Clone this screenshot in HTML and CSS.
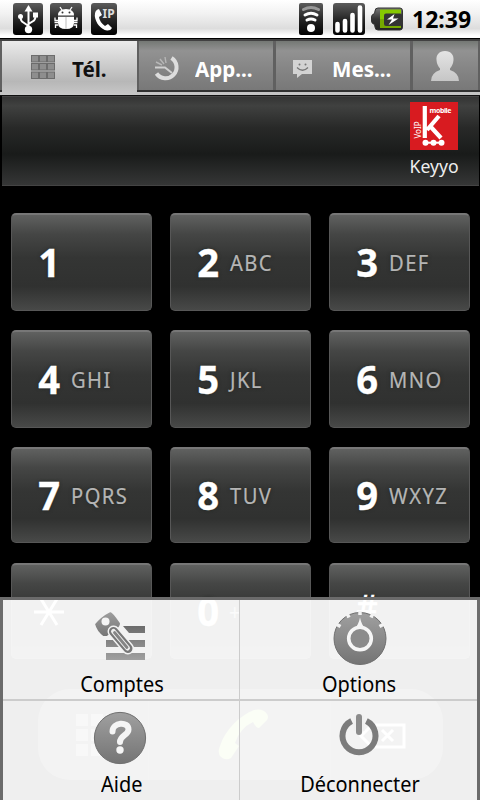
FILE: index.html
```
<!DOCTYPE html>
<html lang="fr">
<head>
<meta charset="utf-8">
<title>Keyyo</title>
<link rel="stylesheet" href="styles.css">
</head>
<body>
<div class="phone">
  <svg width="0" height="0" class="defs">
    <defs>
      <linearGradient id="dark" x1="0" y1="0" x2="0" y2="1"><stop offset="0" stop-color="#5c5c5c"/><stop offset=".55" stop-color="#222"/><stop offset="1" stop-color="#000"/></linearGradient>
      <linearGradient id="mg" x1="0" y1="0" x2="0" y2="1"><stop offset="0" stop-color="#a0a0a0"/><stop offset="1" stop-color="#747474"/></linearGradient>
      <linearGradient id="bar" x1="0" y1="0" x2="0" y2="1"><stop offset="0" stop-color="#6c6c6c"/><stop offset="1" stop-color="#a0a0a0"/></linearGradient>
      <linearGradient id="lg" x1="0" y1="0" x2="0" y2="1"><stop offset="0" stop-color="#e4e4e4"/><stop offset="1" stop-color="#c6c6c6"/></linearGradient>
      <linearGradient id="bat" x1="0" y1="0" x2="0" y2="1"><stop offset="0" stop-color="#777"/><stop offset=".5" stop-color="#333"/><stop offset="1" stop-color="#222"/></linearGradient>
    </defs>
  </svg>
  <header class="status">
    <div class="status-left">
      <svg class="usb" width="30" height="32" viewBox="0 0 30 32"><rect width="30" height="32" rx="3" fill="url(#dark)"/><g fill="none" stroke="#fff" stroke-width="2"><path d="M15.500 26V6M15.500 23L9 18.500Q7.500 17 7.500 14M15.500 21L21 17.500Q22.500 16 22.500 13"/></g><path d="M15.500 2L19.500 8.500H11.500Z" fill="#fff"/><circle cx="15.500" cy="26.500" r="3.700" fill="#fff"/><circle cx="7.500" cy="13.500" r="2.500" fill="#fff"/><rect x="20" y="9.500" width="5" height="5" fill="#fff"/></svg>
      <svg class="bug" width="32" height="32" viewBox="0 0 32 32"><rect width="32" height="32" rx="3" fill="url(#dark)"/><path d="M8 12.500Q8 6 16 6T24 12.500ZM8 13.800H24V20Q24 26 16 26T8 20Z" fill="#fff"/><path d="M12 7L10 4M20 7L22 4M8 17.500H5V14.500M8 19.500H4.500M8 22H5.500V25M24 17.500H27V14.500M24 19.500H27.500M24 22H26.500V25" stroke="#fff" stroke-width="1.300" fill="none"/><path d="M16 14V26" stroke="#bbb"/><circle cx="12.500" cy="9.500" r="1" fill="#333"/><circle cx="19.500" cy="9.500" r="1" fill="#333"/></svg>
      <svg class="ip" width="26" height="32" viewBox="0 0 26 32"><rect width="26" height="32" rx="3" fill="url(#dark)"/><path d="M8 6Q3.500 7 3.800 13C4.500 20 10 26.500 16 27.500Q19.500 27.800 21 25L17 21L14 23Q8.500 19 8 14L11 12Z" fill="#fff"/><text x="11.500" y="15" class="ip-text">IP</text></svg>
    </div>
    <div class="status-right">
      <svg class="wifi" width="24" height="32" viewBox="0 0 24 32"><rect width="24" height="32" rx="2" fill="url(#dark)"/><g fill="none" stroke-width="3" stroke-linecap="round"><path d="M4.500 6.500Q12 2.500 19.500 6.500" stroke="#999"/><path d="M6 12Q12 8.500 18 12M8 17Q12 15 16 17" stroke="#fff"/></g><circle cx="12" cy="25" r="4" fill="#fff"/></svg>
      <svg class="signal" width="32" height="32" viewBox="0 0 32 32"><rect width="32" height="32" rx="3" fill="url(#dark)"/><path d="M4.500 21V27.500M12 18V27.500M19.500 12V27.500M27 4.500V27.500" stroke="#fff" stroke-width="4.600" stroke-linecap="round"/></svg>
      <svg class="battery" width="32" height="24" viewBox="0 0 32 24"><path d="M7 1H29Q31.500 1 31.500 4V20Q31.500 23 29 23H7Q4 23 4 20L3.500 17.500Q.5 16.500 .5 14V10Q.5 7.500 3.500 6.500L4 4Q4 1 7 1Z" fill="url(#bat)" stroke="#333"/><path d="M9 2.500H30V21H9Z" fill="#86c800"/><path d="M9 12H30V21H9Z" fill="#75a900"/><rect x="13" y="6.500" width="18" height="12.500" rx="2" fill="#333"/><path d="M23.500 7L16 12.500H21L17.500 18L27.500 11.500H22Z" fill="#fff"/></svg>
      <span class="clock">12:39</span>
    </div>
  </header>
  <nav class="tabs">
    <div class="tab active">
      <svg width="26" height="26" viewBox="0 0 26 26"><g fill="#8e8e8e" stroke="#6c6c6c"><rect x="1.500" y="1.500" width="7" height="6.500"/><rect x="9.500" y="1.500" width="7" height="6.500"/><rect x="17.500" y="1.500" width="7" height="6.500"/><rect x="1.500" y="9.500" width="7" height="6.500"/><rect x="9.500" y="9.500" width="7" height="6.500"/><rect x="17.500" y="9.500" width="7" height="6.500"/><rect x="1.500" y="18" width="7" height="6.500"/><rect x="9.500" y="18" width="7" height="6.500"/><rect x="17.500" y="18" width="7" height="6.500"/></g></svg>
      <span>Tél.</span>
    </div>
    <div class="tab app">
      <svg width="28" height="28" viewBox="0 0 28 28"><path d="M18.500 3A11 11 0 1 1 3.500 18.500" fill="none" stroke="#ddd" stroke-width="4"/><path d="M2 12.500H12L19 18" fill="none" stroke="#d0d0d0" stroke-width="2"/><path d="M3 7L9 10M7 4L11 9M12 2L13 8" stroke="#b7b7b7" stroke-width="1.400"/></svg>
      <span>App...</span>
    </div>
    <div class="tab mes">
      <svg width="20" height="20" viewBox="0 0 20 20"><path d="M0 1H19V15H9L4 19V15H0Z" fill="#d3d3d3"/><path d="M4 8.500Q9.500 14 15 8.500" stroke="#777" fill="none" stroke-width="1.300"/><circle cx="6.500" cy="5.500" r="1" fill="#777"/><circle cx="12.500" cy="5.500" r="1" fill="#777"/></svg>
      <span>Mes...</span>
    </div>
    <div class="tab contact">
      <svg width="30" height="32" viewBox="0 0 30 32"><path d="M15 1C9 1 6 5 6.500 10C6.800 14 8 16 10 18.500V20Q1 23 1 31H29Q29 23 20 20V18.500C22 16 23.200 14 23.500 10C24 5 21 1 15 1Z" fill="url(#lg)"/></svg>
    </div>
  </nav>
  <section class="display">
    <div class="account">
      <svg width="48" height="48" viewBox="0 0 48 48"><rect width="48" height="48" fill="#d81b20"/><path d="M14.800 4V36M17 28L29 14M20 24L31 36" stroke="#fff" stroke-width="4.200" fill="none"/><path d="M16 40.700H31" stroke="#fff" stroke-width="2"/><circle cx="15.500" cy="40.700" r="3" fill="#fff"/><circle cx="23.500" cy="40.700" r="3" fill="#fff"/><circle cx="31.500" cy="40.700" r="3" fill="#fff"/><text x="19.500" y="11" class="logo-mobile" textLength="22">mobile</text><text transform="translate(11 36.500) rotate(-90)" class="logo-voip" textLength="17">VoIP</text></svg>
      <span>Keyyo</span>
    </div>
  </section>
  <main class="keypad">
    <div class="key"><b>1</b></div>
    <div class="key"><b>2</b><span>ABC</span></div>
    <div class="key"><b>3</b><span>DEF</span></div>
    <div class="key"><b>4</b><span>GHI</span></div>
    <div class="key"><b>5</b><span>JKL</span></div>
    <div class="key"><b>6</b><span>MNO</span></div>
    <div class="key short"><b>7</b><span>PQRS</span></div>
    <div class="key short"><b>8</b><span>TUV</span></div>
    <div class="key short"><b>9</b><span>WXYZ</span></div>
    <div class="key"><svg class="star" width="32" height="28" viewBox="0 0 32 28"><path d="M1 14H31M8 1L24 27M24 1L8 27" stroke="#fff" stroke-width="3"/></svg></div>
    <div class="key"><b>0</b><span class="plus">+</span></div>
    <div class="key"><b class="hash">#</b></div>
  </main>
  <footer class="actions">
    <div class="action"><svg width="44" height="44" viewBox="0 0 44 44"><path d="M1 1h12v12H1zM16 1h12v12H16zM31 1h12v12H31zM1 16h12v12H1zM16 16h12v12H16zM31 16h12v12H31zM1 31h12v12H1zM16 31h12v12H16zM31 31h12v12H31z" fill="#888"/></svg></div>
    <div class="action call"><svg width="52" height="52" viewBox="0 0 52 52"><path d="M3 48Q-1 44 2 37C7 21 21 7 36 1Q45-1 49 5Q51 8 49 11L41 19Q38 19 35 13Q22 19 17 34L21 37L13 49Q8 52 3 48Z" fill="#b5e870"/></svg></div>
    <div class="action"><svg class="erase" width="46" height="26" viewBox="0 0 46 26"><path d="M1 13L12 2H44V24H12ZM22 7L33 18M33 7L22 18" fill="none" stroke="#fff" stroke-width="3"/></svg></div>
  </footer>
  <div class="menu">
    <div class="item">
      <svg class="i-comptes" width="54" height="56" viewBox="0 0 54 56"><path d="M30 18H52V25H36ZM13 32H52V39H13ZM13 45H52V52H13Z" fill="url(#bar)"/><g stroke="#f2f2f2" stroke-width="2" stroke-linejoin="round"><path d="M1 16Q7 8 17 3Q20 3 28 15Q28 19 24 22L14 29H10Q3 24 1 16Z" fill="url(#mg)"/></g><path d="M20.500 23.500L35 40.500" stroke="#f2f2f2" stroke-width="12" stroke-linecap="round"/><path d="M20.500 23.500L35 40.500" stroke="#777" stroke-width="9" stroke-linecap="round"/><path d="M20.500 23.500L34.500 40" stroke="#eee" stroke-width="5" stroke-linecap="round"/><path d="M21.500 24.500L34 39.500" stroke="#858585" stroke-width="2.800" stroke-linecap="round"/><circle cx="12.500" cy="13.500" r="4" fill="#f4f4f4"/></svg>
      <span>Comptes</span>
    </div>
    <div class="item">
      <svg class="i-options" width="54" height="56" viewBox="0 0 54 56"><circle cx="27" cy="30.500" r="26" fill="url(#mg)" stroke="#6f6f6f"/><path d="M27 3V7M14 5.500L16 9.500M40 5.500L38 9.500M3 16L7.500 18.500M51 16L46.500 18.500" stroke="#f3f3f3" stroke-width="3.500"/><path d="M27 9.500Q28.500 17 33 22H21Q25.500 17 27 9.500Z" fill="#f6f6f6"/><circle cx="27" cy="30.500" r="11.300" fill="#8b8b8b" stroke="#f6f6f6" stroke-width="3.600"/></svg>
      <span>Options</span>
    </div>
    <div class="item">
      <svg class="i-aide" width="54" height="56" viewBox="0 0 54 56"><circle cx="27" cy="29" r="25.600" fill="url(#mg)" stroke="#6f6f6f"/><path d="M19.500 22.500C19.500 13 35.500 12 35.500 20.500C35.500 26 27 26.500 27 33" fill="none" stroke="#f5f5f5" stroke-width="6" stroke-linecap="round"/><circle cx="27" cy="41" r="3.700" fill="#f5f5f5"/></svg>
      <span>Aide</span>
    </div>
    <div class="item">
      <svg class="i-deco" width="54" height="56" viewBox="0 0 54 56"><path d="M18.600 12A16.500 16.500 0 1 0 33.400 12" fill="none" stroke="#7c7c7c" stroke-width="6"/><path d="M26 6.500V22" stroke="#f0f0f0" stroke-width="11"/><path d="M26 8V23" stroke="#8c8c8c" stroke-width="6" stroke-linecap="round"/></svg>
      <span>Déconnecter</span>
    </div>
  </div>
</div>
</body>
</html>
```
FILE: styles.css
```
* { box-sizing: border-box; }
body { margin: 0; background: #000; font-family: "Noto Sans", "Open Sans", sans-serif; }
svg { display: block; flex: none; overflow: visible; }
.defs { position: absolute; }
.phone { position: relative; width: 480px; height: 800px; overflow: hidden; background: #000; }
.status { height: 38px; padding: 3px 9px 0 13px; display: flex; justify-content: space-between; background: linear-gradient(#fff 0, #f2f2f2 35%, #ddd 75%, #fff 94%); }
.status-left, .status-right { display: flex; align-items: flex-start; }
.bug { margin-left: 7px; }
.ip { margin-left: 9px; }
.ip-text { font: bold 12px "Noto Sans"; fill: #ddd; }
.signal { margin-left: 10px; }
.battery { margin: 4px 0 0 6px; }
.clock { margin-left: 9px; font-size: 24px; line-height: 32px; font-weight: bold; width: 59px; white-space: nowrap; transform: scaleX(.96); transform-origin: left; color: #000; }
.tabs { display: grid; grid-template-columns: 135px 137px 137px 68px; height: 58px; padding: 0 1px 0 2px; background: linear-gradient(#000 0 1px, #414141 1px 3px, #606060 3px 52px, #303030 52px 54px, #c4c4c4 54px 57px, #111 57px); }
.tab { display: flex; height: 49px; margin: 3px 1px 0 2px; align-items: center; color: #fff; font-weight: bold; font-size: 21px; background: linear-gradient(#747874, #929292 20%, #868686 55%, #787878); }
.tab span { transform: scaleX(.98); transform-origin: left; white-space: nowrap; padding-top: 7px; }
.tab.active { height: 54px; margin: 3px 0 0; padding: 0 0 2px 28px; color: #111; background: linear-gradient(#ebebeb, #cfcfcf 40%, #b7b7b7 75%, #c8c8c8); }
.active span { margin-left: 16px; padding-top: 4px; }
.app { padding-left: 14px; }
.app svg, .mes svg { margin-top: 6px; }
.app span { margin-left: 14px; }
.mes { padding-left: 17px; }
.mes span { margin-left: 19px; }
.contact { padding-left: 17px; }
.display { height: 90px; margin: 0 1px 0 2px; padding: 5px 17px 0 0; border: 1px solid #444; border-width: 1px 0; display: flex; justify-content: flex-end; background: linear-gradient(#343434, #404140 10%, #282928 35%, #191b1a 65%, #353636); }
.account { width: 56px; display: flex; flex-direction: column; align-items: center; color: #eee; font-size: 18px; line-height: 32px; }
.account span { transform: scaleX(.98); }
.logo-mobile { font: bold 7px "Noto Sans"; fill: #fff; }
.logo-voip { font: 8px "Noto Sans"; fill: #fff; }
.keypad { display: grid; grid-template-columns: repeat(3, 141px); grid-template-rows: 98px 98px 97px 96px; gap: 19px 18px; padding: 27px 10px 0 11px; height: 503px; }
.key { display: flex; align-items: center; padding: 0 0 1px 26px; border-radius: 5px; border: 1px solid #575757; border-top: 2px solid #777; background: linear-gradient(#606160, #454645 20%, #343534 45%, #303130 75%, #484948); }
.key.short { margin-bottom: 1px; }
.key b { color: #fff; font-size: 39px; line-height: 50px; width: 22px; transform: scaleX(.98); text-shadow: 0 0 4px #202520; -webkit-text-stroke: .3px #fff; }
.key span { color: #b5b5b5; font-size: 21px; letter-spacing: 1.500px; margin-left: 11px; padding-top: 2px; transform: scaleX(.96); transform-origin: left; text-shadow: 0 0 4px #202520; -webkit-text-stroke: .2px #b5b5b5; }
.key b.hash { font-size: 34px; font-weight: 500; padding-bottom: 9px; }
.key .plus { margin-left: 10px; }
.star { margin: 2px 0 0 -5px; }
.actions { width: 405px; height: 91px; margin-left: 38px; border-radius: 32px; display: grid; grid-template-columns: 110px 183px 112px; background: #484848; overflow: hidden; }
.action { display: flex; align-items: center; padding-left: 37px; }
.call { padding: 0 0 0 69px; border: 1px solid #565656; border-width: 0 1px; }
.action .erase { margin-left: -8px; margin-top: 3px; }
.menu { position: absolute; left: 0; top: 597px; width: 480px; height: 203px; display: grid; grid-template-columns: 237px 237px; grid-template-rows: 101px 99px; border: 3px solid #6b6b6b; border-bottom: 0; background: rgba(255, 255, 255, .937); background-clip: padding-box; }
.item { display: flex; flex-direction: column; align-items: center; padding-top: 8px; color: #000; font-size: 21px; }
.item:nth-child(odd) { border-right: 1px solid #ccc; padding-left: 2px; }
.item:nth-child(even) { padding-left: 2px; }
.item:nth-child(-n+2) { border-bottom: 2px solid #ccc; }
.i-comptes { margin-left: -4px; }
.i-aide { margin-left: -4px; }
.item span { line-height: 28px; margin-top: 6px; white-space: nowrap; transform: scaleX(.95); }
.item:nth-child(n+3) span { margin-top: 5px; }
```
